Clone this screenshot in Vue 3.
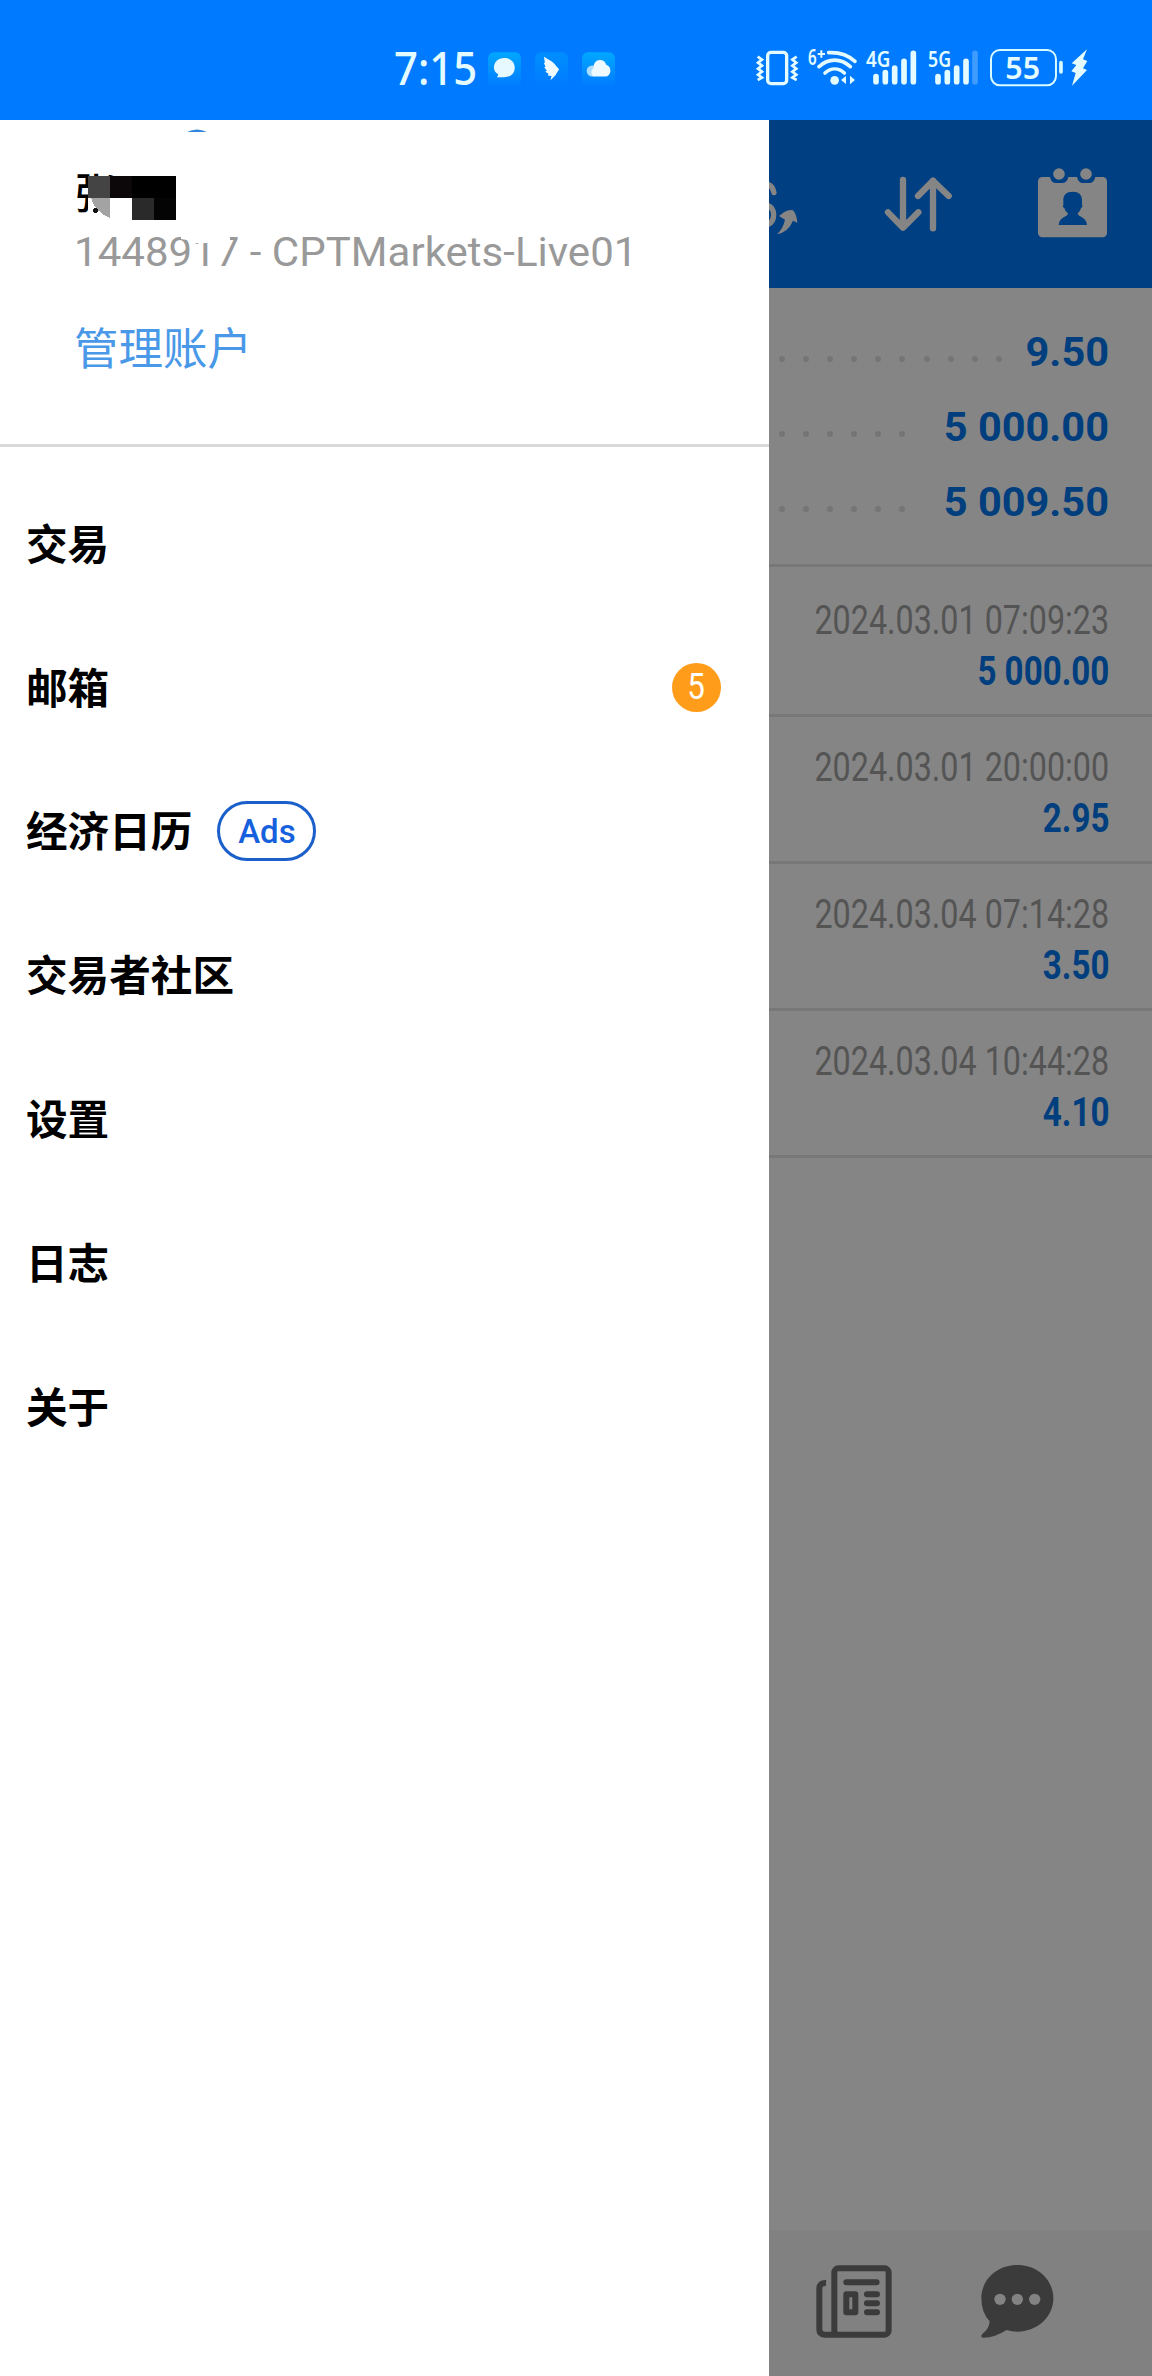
<template>
  <div class="screen">
    <header class="status-bar">
      <div class="status-left">
        <span class="clock">7:15</span>
        <svg class="app-icon" viewBox="0 0 100 108">
          <defs>
            <linearGradient id="tile" x1="0" y1="0" x2="0" y2="1">
              <stop offset="0" stop-color="#00a8ff" />
              <stop offset="1" stop-color="#007aff" />
            </linearGradient>
          </defs>
          <rect width="100" height="106" rx="18" fill="url(#tile)" />
          <path d="M49 18c19 0 32 12 32 29S68 76 49 76H27c2-3 4-6 4-9-8-5-13-11-13-20 0-17 13-29 31-29z" fill="#e6f9ff" />
        </svg>
        <svg class="app-icon" viewBox="0 0 100 108">
          <rect width="100" height="106" rx="18" fill="url(#tile)" opacity=".45" />
          <path d="M27 14c14 9 32 17 37 28l9 10-11 18-15 15 3-13-11-1 2-6-10-6 5-3-8-10 4-2-5-11 3-1z" fill="#f1fbff" />
        </svg>
        <svg class="app-icon" viewBox="0 0 100 108">
          <rect width="100" height="106" rx="18" fill="url(#tile)" />
          <circle cx="31" cy="57" r="17" fill="#a9dcff" />
          <path d="M35 74c-9-6-9-19 0-25-1-15 8-25 20-25 10 0 16 5 18 14 8 2 13 9 13 18 0 10-7 18-17 18z" fill="#eefaff" />
        </svg>
      </div>
      <div class="status-right">
        <svg class="vibrate" viewBox="48 54 126 120" fill="none" stroke="#e4fcff">
          <rect x="83" y="67" width="57" height="94" rx="10" stroke-width="10" />
          <path d="M53 80l13 9-12 9 12 9-12 9 12 9-12 9 12 9-13 7M170 80l-13 9 12 9-12 9 12 9-12 9 12 9-12 9 13 7" stroke-width="8" />
        </svg>
        <svg class="wifi" viewBox="203 54 147 120" fill="none" stroke="#e4fcff">
          <text x="203" y="106" class="tiny" textLength="26" lengthAdjust="spacingAndGlyphs">6</text>
          <path d="M243 61v22M232 72h22" stroke-width="6" />
          <path d="M265 68c32-2 58 7 79 26M236 110c28-26 66-26 94 0M254 129c18-16 40-16 58 0" stroke-width="11" stroke-linecap="round" />
          <circle cx="283" cy="151" r="13" class="solid" />
          <path d="M302 150l15-12v24zM344 150l-15-13v26z" class="solid" />
        </svg>
        <svg class="signal" viewBox="378 54 152 120" fill="none" stroke="#e4fcff">
          <text x="378" y="110" class="tiny" textLength="73" lengthAdjust="spacingAndGlyphs">4G</text>
          <path d="M408 140v15M436 128v27M464 114v41M492 94v61M520 70v85" stroke-width="17" stroke-linecap="round" />
        </svg>
        <svg class="signal" viewBox="565 54 152 120" fill="none" stroke="#e4fcff">
          <text x="565" y="110" class="tiny" textLength="69" lengthAdjust="spacingAndGlyphs">5G</text>
          <path d="M595 140v15M623 128v27M651 114v41M679 94v61" stroke-width="17" stroke-linecap="round" />
          <path d="M706 70v85" stroke="#3f9cff" stroke-width="17" stroke-linecap="round" />
        </svg>
        <svg class="battery" viewBox="749 54 220 120" fill="none" stroke="#d9faff">
          <rect x="752" y="60" width="195" height="106" rx="27" stroke-width="6" />
          <path d="M962 98v28" stroke-width="11" stroke-linecap="round" />
          <text x="795" y="147" class="level" textLength="104" lengthAdjust="spacingAndGlyphs">55</text>
        </svg>
        <svg class="bolt" viewBox="988 54 54 120">
          <path d="M1039 58l-46 42 14 5-15 19 13 5-11 38 45-47-12-5 13-22-13-5z" fill="#e4fcff" />
        </svg>
      </div>
    </header>

    <div class="main">
      <aside class="drawer">
        <svg class="avatar-edge" viewBox="0 0 22 4">
          <path d="M1 4Q11-1 21 4z" fill="#2f86dc" />
        </svg>
        <section class="account">
          <div class="owner">
            <span class="owner-name">张</span>
            <svg class="mosaic" viewBox="0 0 88 44" shape-rendering="crispEdges">
              <rect width="88" height="44" fill="#fff" />
              <rect width="22" height="22" fill="#444" />
              <rect x="22" width="22" height="22" fill="#0c0708" />
              <rect x="44" width="44" height="22" fill="#000" />
              <path d="M3 22h19v20Q7 36 3 22z" fill="#a3a3a3" />
              <rect x="44" y="22" width="22" height="22" fill="#2a2a2a" />
              <rect x="66" y="22" width="22" height="22" fill="#040404" />
              <circle cx="7.500" cy="34.500" r="2.500" fill="#111" />
            </svg>
          </div>
          <div class="login">
            <span class="login-text">1448917 - CPTMarkets-Live01</span>
            <svg class="smudge" viewBox="0 0 50 10">
              <path d="M0 0H49V8H12L6 5 0 4z" fill="#fff" />
            </svg>
          </div>
          <a class="manage">管理账户</a>
        </section>
        <nav class="menu">
          <div v-for="item in menu" :key="item.label" class="menu-item">
            <span class="menu-label">{{ item.label }}</span>
            <span v-if="item.ads" class="ads">Ads</span>
            <span v-if="item.count" class="count"><span>{{ item.count }}</span></span>
          </div>
        </nav>
      </aside>

      <div class="content">
        <div class="toolbar">
          <svg class="currency" viewBox="88 189 90 186">
            <path d="M76 222Q98 222 103 248M84 286Q101 292 102 314Q102 338 80 346" fill="none" stroke="#858585" stroke-width="16" stroke-linecap="round" />
            <path d="M118 318l16-12q14-8 26-5 11 12 13 37l-13-6q-13 33-48 41 19-19 24-44z" fill="#858585" />
          </svg>
          <svg class="sort" viewBox="432 198 206 170" fill="none" stroke="#858585" stroke-width="19" stroke-linecap="round" stroke-linejoin="round">
            <path d="M489 210V352M444 307L489 353L535 307" />
            <path d="M579 355V212M534 258L579 212L626 258" />
          </svg>
          <svg class="calendar" viewBox="891 171 213 213">
            <rect x="894" y="201" width="207" height="181" rx="13" fill="#858585" />
            <g stroke="#003f82" stroke-width="9">
              <path d="M930 196v5q4 18 18 18h18q15 0 19-18v-5zM1011 196v5q4 18 18 18h18q15 0 19-18v-5z" fill="#003f82" stroke="none" />
              <circle cx="957" cy="192" r="22" fill="#858585" />
              <circle cx="1038" cy="192" r="22" fill="#858585" />
            </g>
            <path d="M998 245c19 0 28 10 28 25v15c3 4 1 8-3 9-2 8-6 12-10 16 2 13 25 9 28 35H956c3-26 26-22 28-35-5-4-9-8-11-16-4-1-6-5-3-9v-15c0-15 9-25 28-25z" fill="#003f82" />
          </svg>
        </div>

        <div class="summary">
          <div v-for="row in summary" :key="row.value" class="summary-row">
            <span class="dots"><i v-for="n in row.dots" :key="n"></i></span>
            <b>{{ row.value }}</b>
          </div>
        </div>

        <div class="records">
          <div v-for="record in records" :key="record.time" class="record">
            <span class="record-time">{{ record.time }}</span>
            <b class="record-value">{{ record.value }}</b>
          </div>
        </div>

        <footer class="tab-bar">
          <svg class="news" viewBox="226 192 232 224" fill="none" stroke="#3b3b3b" stroke-linecap="round">
            <rect x="284" y="205" width="163" height="199" rx="12" stroke-width="18" />
            <path d="M259 249q-20-1-20 18v121q0 16 16 16h38" stroke-width="18" stroke-linecap="butt" />
            <path d="M320 247h91M382 283h30M382 310h30M382 337h30" stroke-width="18" />
            <rect x="320" y="283" width="27" height="54" stroke-width="18" stroke-linejoin="round" />
          </svg>
          <svg class="chat" viewBox="722 192 224 224">
            <path d="M834 195c61 0 108 44 108 100s-48 100-108 100q-17 0-32-5-36 23-70 23-11-2-3-11 21-15 22-38-25-26-25-69c0-56 47-100 108-100z" fill="#3b3b3b" />
            <g fill="#838383">
              <circle cx="782" cy="298" r="17" />
              <circle cx="834" cy="298" r="17" />
              <circle cx="886" cy="298" r="17" />
            </g>
          </svg>
        </footer>
      </div>
    </div>
  </div>
</template>

<script setup>
import { ref } from "vue";

// 侧边菜单
const menu = ref([
  { label: "交易" },
  { label: "邮箱", count: 5 },
  { label: "经济日历", ads: true },
  { label: "交易者社区" },
  { label: "设置" },
  { label: "日志" },
  { label: "关于" },
]);

// 账户汇总
const summary = ref([
  { value: "9.50", dots: 10 },
  { value: "5 000.00", dots: 6 },
  { value: "5 009.50", dots: 6 },
]);

// 历史记录
const records = ref([
  { time: "2024.03.01 07:09:23", value: "5 000.00" },
  { time: "2024.03.01 20:00:00", value: "2.95" },
  { time: "2024.03.04 07:14:28", value: "3.50" },
  { time: "2024.03.04 10:44:28", value: "4.10" },
]);
</script>

<style>
body {
  margin: 0;
}
</style>

<style scoped>
.screen {
  display: flex;
  flex-direction: column;
  width: 1152px;
  height: 2376px;
  overflow: hidden;
  background: #fff;
  font-family: Roboto, "Noto Sans CJK SC", sans-serif;
}

svg {
  display: block;
  flex: none;
}

.status-bar {
  display: flex;
  justify-content: space-between;
  box-sizing: border-box;
  height: 120px;
  padding: 48px 64px 0 394px;
  background: #007aff;
}

.status-left,
.status-right {
  display: flex;
}

.status-left {
  align-items: flex-start;
  gap: 14px;
}

.clock {
  width: 80px;
  color: #e4fcff;
  font: 500 45px/40px "Noto Sans", sans-serif;
  white-space: nowrap;
  transform: scaleX(0.93);
  transform-origin: left;
}

.app-icon {
  width: 33px;
  height: 36px;
  margin-top: 4px;
}

.status-right svg {
  height: 40px;
  overflow: visible;
}

.vibrate {
  width: 42px;
  margin-right: 9.7px;
}

.wifi {
  width: 49px;
  margin-right: 9.3px;
}

.signal {
  width: 50.7px;
  margin-right: 11.3px;
}

.battery {
  width: 73.3px;
  margin-right: 6.3px;
}

.bolt {
  width: 18px;
}

.tiny,
.level,
.solid {
  fill: #e4fcff;
  stroke: none;
}

.tiny {
  font: 600 63px "Noto Sans", sans-serif;
}

.level {
  font: 600 93px "Noto Sans", sans-serif;
}

.main {
  display: flex;
  flex: 1;
}

/* 抽屉盖在列表之上 */
.drawer {
  position: relative;
  z-index: 1;
  flex: none;
  width: 769px;
  background: #fff;
}

.avatar-edge {
  position: absolute;
  top: 8px;
  left: 186px;
  width: 22px;
  height: 4px;
}

.account {
  box-sizing: border-box;
  height: 327px;
  padding: 50px 0 0 74px;
  border-bottom: 3px solid #d9d9d9;
}

.owner {
  position: relative;
  height: 52px;
  color: #000;
  font-size: 42px;
  font-weight: 500;
  line-height: 50px;
}

.mosaic {
  position: absolute;
  top: 6px;
  left: 14px;
  width: 88px;
  height: 44px;
}

.login {
  position: relative;
  height: 60px;
  color: #999;
  font-size: 41.5px;
  line-height: 60px;
  white-space: nowrap;
}

.login-text {
  display: inline-block;
  transform: scaleX(1.013);
  transform-origin: left;
}

.smudge {
  position: absolute;
  top: 13px;
  left: 107px;
  width: 50px;
  height: 10px;
}

.manage {
  display: block;
  margin-top: 36px;
  color: #4a98e8;
  font-size: 44.5px;
  line-height: 64px;
}

.menu {
  padding-top: 25px;
}

.menu-item {
  display: flex;
  align-items: center;
  height: 143.8px;
  padding: 0 48px 0 26px;
  color: #000;
  font-size: 41.6px;
  font-weight: 700;
}

.menu-label {
  padding-bottom: 4px;
}

.ads {
  box-sizing: border-box;
  width: 99px;
  height: 60px;
  margin-left: 25px;
  border: 3px solid #1b5fcb;
  border-radius: 30px;
  color: #1560dd;
  font-size: 33px;
  font-weight: 500;
  line-height: 55px;
  text-align: center;
}

.count {
  width: 49px;
  height: 49px;
  margin-left: auto;
  border-radius: 50%;
  background: #ff9c1a;
  color: #fff;
  font-size: 36px;
  font-weight: 400;
  line-height: 49px;
  text-align: center;
}

.count span {
  display: inline-block;
  transform: scaleX(0.87);
}

.content {
  display: flex;
  flex: 1;
  flex-direction: column;
  min-width: 0;
  background: #858585;
}

.toolbar {
  display: flex;
  align-items: center;
  height: 168px;
  background: #003f82;
}

.currency {
  width: 30px;
  height: 62px;
}

.sort {
  width: 68.7px;
  height: 56.7px;
  margin: 0 84.3px 0 85px;
}

.calendar {
  width: 71px;
  height: 71px;
  margin-bottom: 3px;
}

.summary {
  padding: 26px 43px 25px 10px;
  border-bottom: 3px solid #777;
}

.summary-row {
  display: flex;
  justify-content: space-between;
  height: 75px;
  color: #003e7e;
  font-size: 41.5px;
  line-height: 75px;
}

.dots {
  display: flex;
  gap: 18.1px;
  padding-top: 42px;
}

.dots i {
  width: 6px;
  height: 6px;
  border-radius: 50%;
  background: #757575;
}

.records {
  padding-top: 3px;
}

.record {
  display: flex;
  flex-direction: column;
  align-items: flex-end;
  box-sizing: border-box;
  height: 147px;
  padding: 25px 43px 0 0;
  border-bottom: 3px solid #777;
  font-size: 40px;
  line-height: 51px;
  white-space: nowrap;
}

.record-time {
  color: #545454;
  transform: scaleX(0.807);
  transform-origin: right;
}

.record-value {
  color: #003e7e;
  transform: scaleX(0.828);
  transform-origin: right;
}

.tab-bar {
  display: flex;
  gap: 88px;
  box-sizing: border-box;
  height: 146px;
  margin-top: auto;
  padding: 34px 0 0 46px;
  background: #818181;
}

.news {
  width: 77.3px;
  height: 74.7px;
}

.chat {
  width: 74.7px;
  height: 74.7px;
}
</style>
